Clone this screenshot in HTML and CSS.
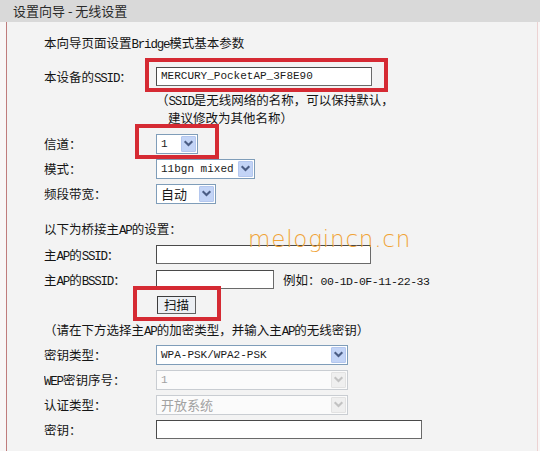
FILE: index.html
```html
<!DOCTYPE html>
<html lang="zh-CN">
<head>
<meta charset="utf-8">
<title>设置向导 - 无线设置</title>
<link rel="stylesheet" href="styles.css">
</head>
<body>
<div class="hdr">设置向导 - 无线设置</div>
<div class="panel">
  <div class="intro">本向导页面设置<span class="en">Bridge</span>模式基本参数</div>

  <div class="row row-ssid">
    <div class="lbl">本设备的<span class="en">SSID</span>：</div>
    <div class="ctl">
      <div class="wrap">
        <div class="input w-ssid"><span class="val">MERCURY_PocketAP_3F8E90</span></div>
        <span class="hl hl-ssid"></span>
      </div>
    </div>
  </div>
  <div class="note">
    <div class="line">（<span class="en">SSID</span>是无线网络的名称，可以保持默认，</div>
    <div class="line indent">建议修改为其他名称）</div>
  </div>

  <div class="row row-ch">
    <div class="lbl">信道：</div>
    <div class="ctl">
      <div class="wrap">
        <div class="sel w-ch"><span class="val">1</span><span class="arr"><svg viewBox="0 0 10 10"><path d="M2.2 3.6 L5 6.4 L7.8 3.6"/></svg></span></div>
        <span class="hl hl-ch"></span>
      </div>
    </div>
  </div>
  <div class="row">
    <div class="lbl">模式：</div>
    <div class="ctl">
      <div class="sel w-mode"><span class="val">11bgn mixed</span><span class="arr"><svg viewBox="0 0 10 10"><path d="M2.2 3.6 L5 6.4 L7.8 3.6"/></svg></span></div>
    </div>
  </div>
  <div class="row">
    <div class="lbl">频段带宽：</div>
    <div class="ctl">
      <div class="sel w-bw"><span class="val cjk">自动</span><span class="arr"><svg viewBox="0 0 10 10"><path d="M2.2 3.6 L5 6.4 L7.8 3.6"/></svg></span></div>
    </div>
  </div>

  <div class="section">以下为桥接主<span class="en">AP</span>的设置：</div>
  <div class="row row-first">
    <div class="lbl">主<span class="en">AP</span>的<span class="en">SSID</span>：</div>
    <div class="ctl"><div class="input w-mssid"></div></div>
  </div>
  <div class="row">
    <div class="lbl">主<span class="en">AP</span>的<span class="en">BSSID</span>：</div>
    <div class="ctl inline">
      <div class="input w-bssid"></div>
      <span class="eg">例如：<span class="en eg-val">00-1D-0F-11-22-33</span></span>
    </div>
  </div>
  <div class="row">
    <div class="lbl"></div>
    <div class="ctl">
      <div class="wrap">
        <div class="btn">扫描</div>
        <span class="hl hl-scan"></span>
      </div>
    </div>
  </div>
  <div class="section tight">（请在下方选择主<span class="en">AP</span>的加密类型，并输入主<span class="en">AP</span>的无线密钥）</div>

  <div class="row">
    <div class="lbl">密钥类型：</div>
    <div class="ctl">
      <div class="sel w-key"><span class="val">WPA-PSK/WPA2-PSK</span><span class="arr"><svg viewBox="0 0 10 10"><path d="M2.2 3.6 L5 6.4 L7.8 3.6"/></svg></span></div>
    </div>
  </div>
  <div class="row">
    <div class="lbl"><span class="en">WEP</span>密钥序号：</div>
    <div class="ctl">
      <div class="sel w-key disabled"><span class="val">1</span><span class="arr"><svg viewBox="0 0 10 10"><path d="M2.2 3.6 L5 6.4 L7.8 3.6"/></svg></span></div>
    </div>
  </div>
  <div class="row">
    <div class="lbl">认证类型：</div>
    <div class="ctl">
      <div class="sel w-key disabled"><span class="val cjk">开放系统</span><span class="arr"><svg viewBox="0 0 10 10"><path d="M2.2 3.6 L5 6.4 L7.8 3.6"/></svg></span></div>
    </div>
  </div>
  <div class="row">
    <div class="lbl">密钥：</div>
    <div class="ctl"><div class="input w-pass"></div></div>
  </div>

  <div class="watermark">melogincn.cn</div>
</div>
</body>
</html>
```
FILE: styles.css
```css
html, body {
  margin: 0;
  padding: 0;
}
body {
  width: 540px;
  height: 451px;
  overflow: hidden;
  background: #f8f6f6;
  font-family: "Noto Sans CJK SC", "Noto Sans", sans-serif;
  font-size: 12.5px;
  color: #151515;
}
.en {
  font-family: "Liberation Mono", "DejaVu Sans Mono", monospace;
  font-size: 12.5px;
  letter-spacing: -1.2px;
  line-height: 1;
}
.hdr {
  height: 22px;
  line-height: 22px;
  background: #d9d9d9;
  padding-left: 13px;
  font-size: 13px;
  color: #2a2a2a;
}
.panel {
  position: relative;
  box-sizing: border-box;
  height: 429px;
  margin: 0 2px 0 6px;
  padding: 8px 0 0 37px;
  background: #f3f3f3;
  border-left: 1px solid #bf7c7c;
  border-right: 1px solid #ecd2d2;
}
.intro {
  height: 25px;
  line-height: 25px;
  overflow: hidden;
}
.row {
  display: grid;
  grid-template-columns: 112px auto;
  align-items: center;
  height: 25px;
}
.row-ssid {
  height: 30px;
  margin-top: 6px;
}
.row-ch {
  margin-top: 4px;
}
.row-first {
  margin-top: 1px;
}
.lbl {
  height: 25px;
  line-height: 25px;
  overflow: hidden;
}
.ctl {
  display: flex;
  align-items: center;
}
.ctl.inline {
  gap: 9px;
}
.wrap {
  position: relative;
}
.note {
  margin: 0 0 0 112px;
}
.note .line {
  height: 18px;
  line-height: 18px;
  overflow: hidden;
}
.note .indent {
  padding-left: 12px;
}
.section {
  height: 25px;
  line-height: 25px;
  margin-top: 10px;
  overflow: hidden;
}
.section.tight {
  margin-top: 0;
}

/* text inputs */
.input {
  box-sizing: border-box;
  height: 19px;
  background: #ffffff;
  border: 1px solid #4a4a4a;
  border-right-color: #6a6a6a;
  border-bottom-color: #6a6a6a;
  display: flex;
  align-items: center;
  padding-left: 4px;
}
.input .val {
  font-family: "Liberation Mono", "DejaVu Sans Mono", monospace;
  font-size: 11px;
  color: #1a1a1a;
}
.w-ssid { width: 216px; }
.w-mssid { width: 215px; }
.w-bssid { width: 118px; }
.w-pass { width: 266px; }

.eg {
  font-size: 12.5px;
}
.eg-val {
  font-size: 11.5px;
  letter-spacing: -0.5px;
}

/* select boxes */
.sel {
  box-sizing: border-box;
  height: 20px;
  background: #ffffff;
  border: 1px solid #7f9db9;
  display: flex;
  align-items: center;
  justify-content: space-between;
  padding: 1px;
}
.sel .val {
  padding-left: 3px;
  font-family: "Liberation Mono", "DejaVu Sans Mono", monospace;
  font-size: 11px;
  color: #1a1a1a;
}
.sel .val.cjk {
  font-family: "Noto Sans CJK SC", sans-serif;
  font-size: 13px;
}
.sel .arr {
  box-sizing: border-box;
  width: 15px;
  height: 16px;
  background: #c3d4f6;
  border: 1px solid #b4c7ee;
  border-radius: 1px;
  display: flex;
  align-items: center;
  justify-content: center;
}
.sel .arr svg {
  width: 11px;
  height: 11px;
}
.sel .arr path {
  fill: none;
  stroke: #4b5d84;
  stroke-width: 1.9;
  stroke-linecap: square;
}
.sel.disabled {
  border-color: #c9cdd2;
  background: #fbfbfb;
}
.sel.disabled .val {
  color: #a2a2a2;
}
.sel.disabled .arr {
  background: #efefef;
  border-color: #e2e2e2;
}
.sel.disabled .arr path {
  stroke: #c2c2c2;
}
.w-ch { width: 42px; }
.w-mode { width: 99px; }
.w-bw { width: 60px; }
.w-key { width: 192px; }

/* button */
.btn {
  box-sizing: border-box;
  width: 39px;
  height: 18px;
  margin-left: 1px;
  line-height: 16px;
  text-align: center;
  font-size: 12.5px;
  background: #eceff3;
  border: 1px solid #3c3c3c;
  border-right-color: #606060;
  border-bottom-color: #606060;
  color: #111;
}

/* red highlight boxes laid over the controls */
.hl {
  position: absolute;
  border: 4px solid #d52a33;
  pointer-events: none;
}
.hl-ssid { left: -11px; right: -16px; top: -9px; bottom: -6px; }
.hl-ch { left: -21px; right: -21px; top: -10px; bottom: -5px; }
.hl-scan { left: -23px; right: -25px; top: -10px; bottom: -7px; }

/* watermark overlay */
.watermark {
  position: absolute;
  left: 241px;
  top: 206px;
  font-family: "DejaVu Sans", sans-serif;
  font-weight: 200;
  font-size: 23px;
  line-height: 23px;
  letter-spacing: 0.8px;
  color: #f0a336;
}
```
